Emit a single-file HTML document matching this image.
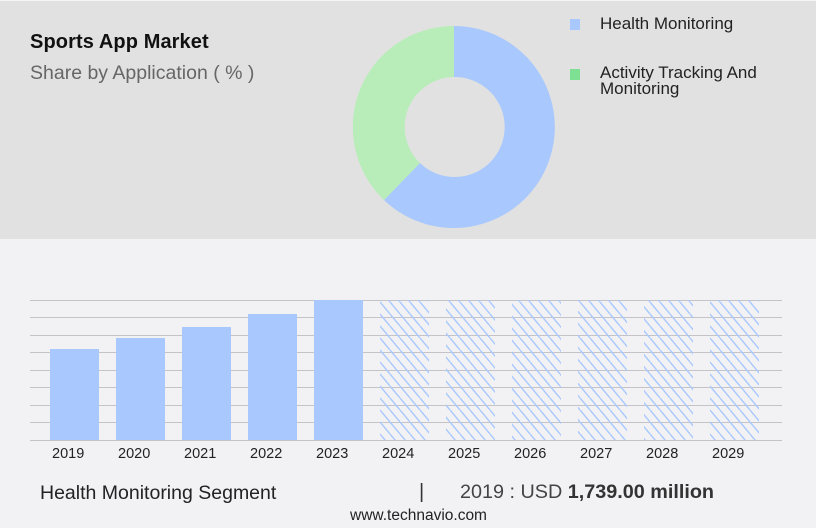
<!DOCTYPE html>
<html><head><style>
body{margin:0;width:816px;height:528px;background:#f2f2f4;font-family:"Liberation Sans",sans-serif;position:relative;overflow:hidden}
.top{position:absolute;left:0;top:0;width:816px;height:238px;background:#e1e1e1;border-top:1px solid #f4f4f4}
.t{position:absolute;white-space:nowrap}
</style></head><body>
<div class="top"></div>
<div class="t" style="left:30px;top:31px;font-size:20px;font-weight:bold;color:#111;letter-spacing:0.1px">Sports App Market</div>
<div class="t" style="left:30px;top:62px;font-size:19.5px;color:#666">Share by Application ( % )</div>
<svg style="position:absolute;left:0;top:0" width="816" height="238">
<defs><clipPath id="c"><rect x="0" y="0" width="816" height="228"/></clipPath></defs>
<g clip-path="url(#c)">
<path d="M454,26 A101,101 0 1 1 384,200 L420,163 A50,50 0 1 0 454,77 Z" fill="#a8c8fe"/>
<path d="M384,200 A101,101 0 0 1 454,26 L454,77 A50,50 0 0 0 420,163 Z" fill="#b8edb9"/>
</g>
<rect x="570" y="19" width="10" height="11" fill="#a8c8fe"/>
<rect x="570" y="69" width="10" height="11" fill="#7ee092"/>
</svg>
<div class="t" style="left:600px;top:14px;font-size:17px;color:#222">Health Monitoring</div>
<div class="t" style="left:600px;top:65px;font-size:17px;color:#222;line-height:16px">Activity Tracking And<br>Monitoring</div>
<svg style="position:absolute;left:0;top:290px" width="816" height="160">
<defs><pattern id="h" x="0" y="0" width="10" height="12" patternUnits="userSpaceOnUse"><path d="M0,0 L10,12 M-10,0 L0,12 M10,0 L20,12" stroke="#a8c8fe" stroke-width="1.4"/></pattern></defs>
<g stroke="#c4c4c8" stroke-width="1">
<line x1="30" x2="782" y1="10.5" y2="10.5"/><line x1="30" x2="782" y1="27.5" y2="27.5"/><line x1="30" x2="782" y1="45.5" y2="45.5"/><line x1="30" x2="782" y1="62.5" y2="62.5"/><line x1="30" x2="782" y1="80.5" y2="80.5"/><line x1="30" x2="782" y1="97.5" y2="97.5"/><line x1="30" x2="782" y1="115.5" y2="115.5"/><line x1="30" x2="782" y1="132.5" y2="132.5"/><line x1="30" x2="782" y1="150.5" y2="150.5"/>
</g>
<g fill="#a8c8fe">
<rect x="50" y="59" width="49" height="91"/><rect x="116" y="48" width="49" height="102"/><rect x="182" y="37" width="49" height="113"/><rect x="248" y="24" width="49" height="126"/><rect x="314" y="10" width="49" height="140"/>
</g>
<g fill="url(#h)">
<rect x="380" y="10" width="49" height="140"/><rect x="446" y="10" width="49" height="140"/><rect x="512" y="10" width="49" height="140"/><rect x="578" y="10" width="49" height="140"/><rect x="644" y="10" width="49" height="140"/><rect x="710" y="10" width="49" height="140"/>
</g>
</svg>
<div style="position:absolute;top:446px;left:0;font-size:14.5px;color:#222">
<span class="t" style="left:52px">2019</span><span class="t" style="left:118px">2020</span><span class="t" style="left:184px">2021</span><span class="t" style="left:250px">2022</span><span class="t" style="left:316px">2023</span><span class="t" style="left:382px">2024</span><span class="t" style="left:448px">2025</span><span class="t" style="left:514px">2026</span><span class="t" style="left:580px">2027</span><span class="t" style="left:646px">2028</span><span class="t" style="left:712px">2029</span>
</div>
<div class="t" style="left:40px;top:482px;font-size:19.5px;color:#222">Health Monitoring Segment</div>
<div class="t" style="left:419px;top:481px;font-size:20px;color:#333">|</div>
<div class="t" style="left:460px;top:481px;font-size:19.8px;color:#444">2019 : USD <b style="color:#333">1,739.00 million</b></div>
<div class="t" style="left:350px;top:507px;font-size:15.5px;color:#222">www.technavio.com</div>
</body></html>
